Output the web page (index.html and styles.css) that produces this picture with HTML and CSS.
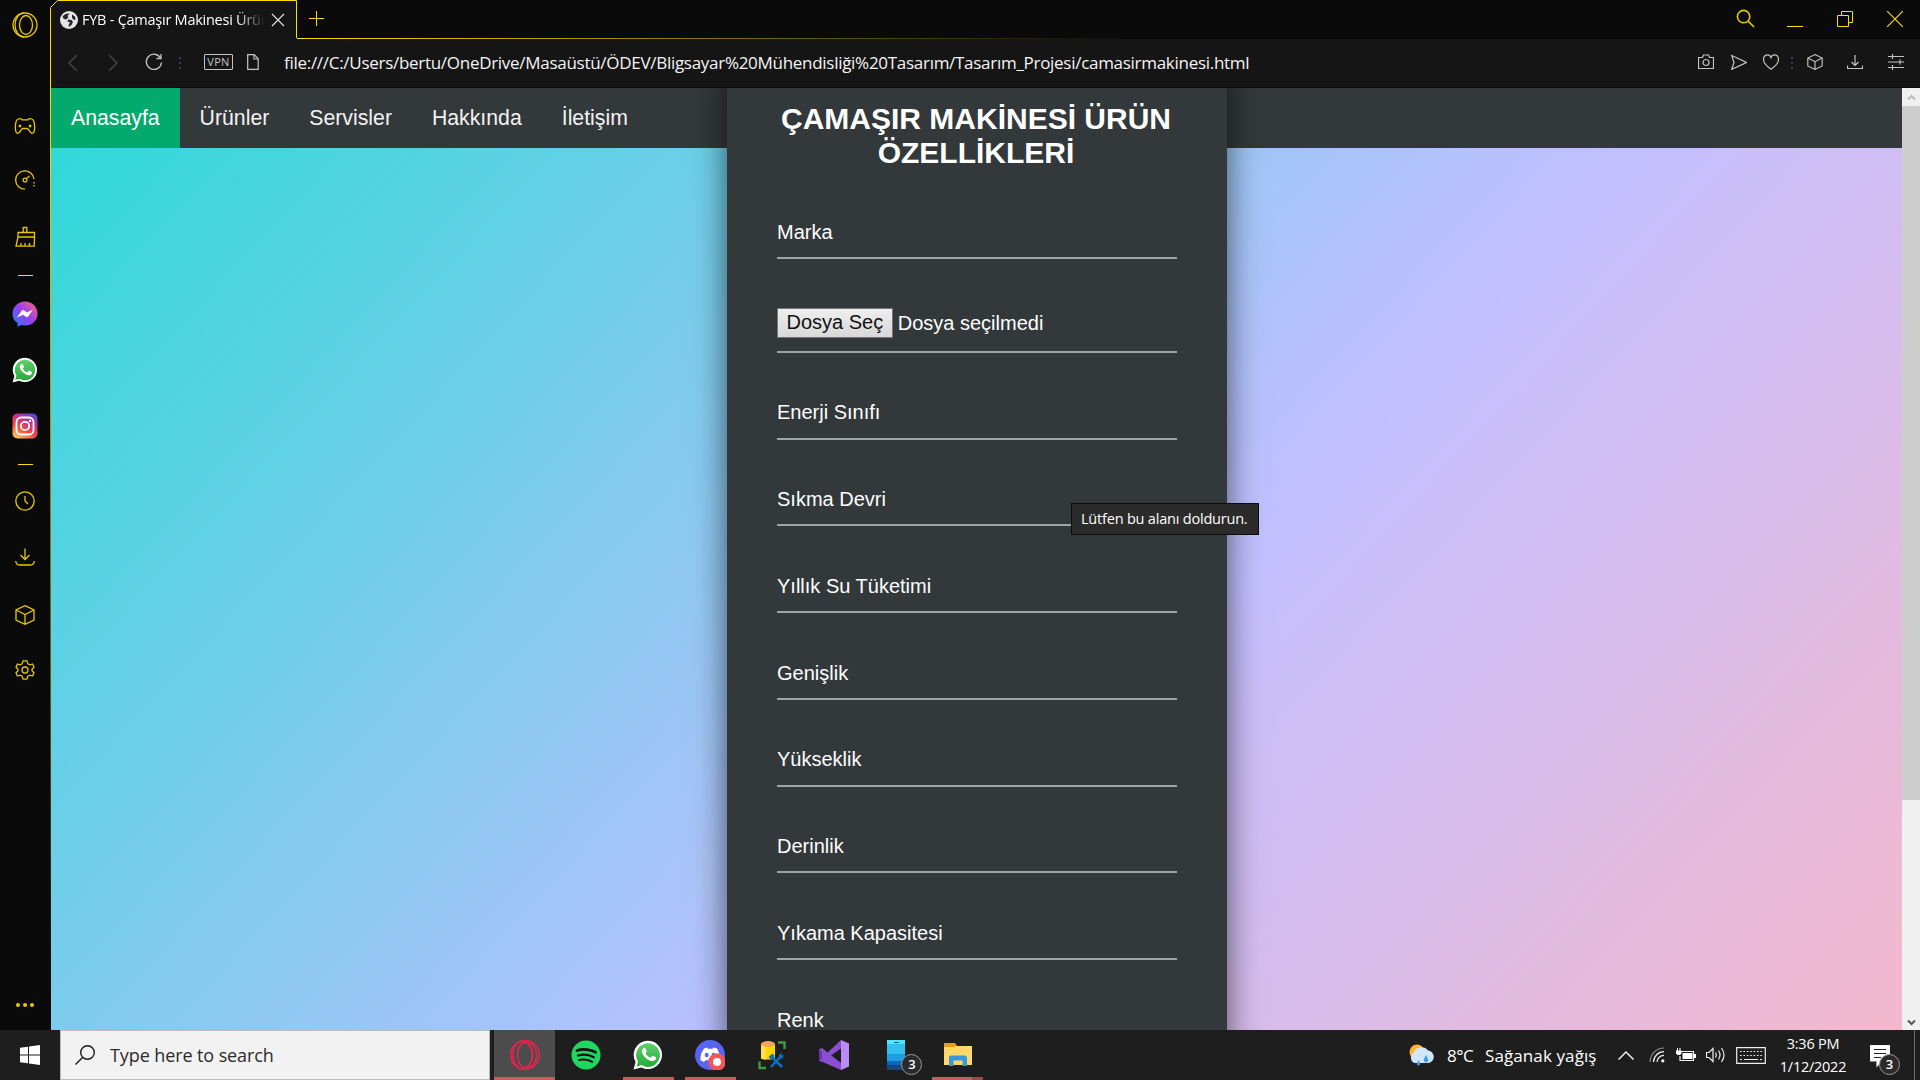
FILE: index.html
```html
<!DOCTYPE html>
<html lang="tr">
<head>
<meta charset="utf-8">
<title>FYB - Çamaşır Makinesi Ürün Özellikleri</title>
<link rel="stylesheet" href="styles.css">
</head>
<body>
<svg class="defs" aria-hidden="true">
  <defs>
    <linearGradient id="msg" x1="0" y1="1" x2="1" y2="0"><stop offset="0" stop-color="#1a86ff"/><stop offset=".5" stop-color="#9a3df0"/><stop offset="1" stop-color="#ff6a75"/></linearGradient>
    <linearGradient id="insta" x1=".2" y1="1" x2=".8" y2="0"><stop offset="0" stop-color="#fdc75c"/><stop offset=".35" stop-color="#f0503f"/><stop offset=".65" stop-color="#cb2f88"/><stop offset="1" stop-color="#5c49d0"/></linearGradient>
    <linearGradient id="waG" x1="0" y1="0" x2="0" y2="1"><stop offset="0" stop-color="#5fd06b"/><stop offset="1" stop-color="#28a93b"/></linearGradient>
    <linearGradient id="edgeX" gradientUnits="userSpaceOnUse" x1="297" y1="0" x2="1120" y2="0"><stop offset="0" stop-color="#ffdd00"/><stop offset="1" stop-color="#ffdd00" stop-opacity="0"/></linearGradient>
    <linearGradient id="edgeY" gradientUnits="userSpaceOnUse" x1="0" y1="100" x2="0" y2="1000"><stop offset="0" stop-color="#ffdd00"/><stop offset="1" stop-color="#ffdd00" stop-opacity="0"/></linearGradient>
    <symbol id="whatsapp" viewBox="0 0 30 30">
      <path d="M.5 29.5 2.6 22A14.2 14.2 0 1 1 8.2 27.4Z" fill="#fff"/>
      <path d="M3.6 26.4 5 21.5A11.9 11.9 0 1 1 8.6 25.1Z" fill="url(#waG)"/>
      <path d="M10.5 8.2c.6-.6 1.6-.6 2 .1l1.2 2.7c.2.6-.1 1-.9 2.1-.2.3-.1.6.1.9 1 1.600 2.400 2.800 4.200 3.500.4.200.7.100 1-.200l1-1.300c.3-.4.7-.4 1.100-.2l2.500 1.200c.5.300.6.500.5 1.100-.3 2-1.900 3.100-3.900 3-4.800-.5-10-5.200-10.400-9.800 0-1.300.7-2.300 1.600-3.100Z" fill="#fff"/>
    </symbol>
    <symbol id="cube" viewBox="0 0 20 20"><path d="M10 .7 19 5v10l-9 4.300L1 15V5ZM1 5l9 4.600L19 5M10 9.600v9.700"/></symbol>
  </defs>
</svg>

<div class="browser">
  <aside class="sidebar">
    <svg class="s-icon s-opera" viewBox="-15 -15 30 30"><circle r="12"/><ellipse rx="6.500" ry="9.500" cx="1"/><path d="M-1-12A9 12 0 0 0-1 12"/></svg>
    <svg class="s-icon s-gamepad" viewBox="-15 -15 30 30"><path d="M-3-6.200C-4-7.500-5.500-7.500-6.800-7-9-6-9.600-3-9.600 1-9.700 5-9 7.300-7 7.300-4.500 7.300-4.500 2.500-2 2.500h4C4.500 2.500 4.500 7.300 7 7.300 9 7.300 9.700 5 9.600 1 9.600-3 9-6 6.800-7 5.500-7.500 4-7.500 3-6.200Z"/><path class="dot" d="M-6.300-1.200h2.400v2.400h-2.400zM3.900-1.200h2.400v2.400H3.900z"/></svg>
    <svg class="s-icon s-gauge" viewBox="-15 -15 30 30"><path d="M0 9.200A9.200 9.200 0 1 1 9-1M1.200-1.200 4.500-4"/><circle r="1.900"/><path d="M9 2v6" stroke-dasharray="1.500 1.500"/></svg>
    <svg class="s-icon s-brush" viewBox="-15 -15 30 30"><path d="M-7-4.500H9.500V0H-7ZM-1.800-4.500v-5h3.600v5M-7 0-9 9.200H9.200L9.500 0M-4 9v-3M0 9v-3M4.500 9v-3"/></svg>
    <i class="s-line s-line-a"></i>
    <svg class="s-icon s-messenger fill" viewBox="-15 -15 30 30"><path d="M0-12.500C7-12.500 12.500-7.200 12.500-.3S7 11.500 0 11.500c-1.500 0-2.500-.2-3.800-.5L-7.500 12.700v-3.700C-11 6.700-12.500 3.500-12.500-.3-12.500-7.200-7-12.500 0-12.500Z" fill="url(#msg)"/><path d="M-8 3.500-3.400-3.200C-2.500-4.300-1.700-4.200-.8-3.600L1.900-1.600 8-4.600 3.400 2.200C2.500 3.400 1.700 3.400.8 2.700L-1.900.7Z" fill="#fff"/></svg>
    <svg class="s-icon s-wa fill" viewBox="-2.500 -2.500 35 35"><use href="#whatsapp" width="30" height="30"/></svg>
    <svg class="s-icon s-insta fill" viewBox="-15 -15 30 30"><rect x="-12.500" y="-12.500" width="25" height="25" rx="5" fill="url(#insta)"/><g fill="none" stroke="#fff" stroke-width="1.800"><rect x="-8.500" y="-8.500" width="17" height="17" rx="4.500"/><circle r="4.200"/></g><circle cx="5" cy="-5" r="1.200" fill="#fff"/></svg>
    <i class="s-line s-line-b"></i>
    <svg class="s-icon s-clock" viewBox="-15 -15 30 30"><circle r="9.200"/><path d="M0-5V0L3 3"/></svg>
    <svg class="s-icon s-down" viewBox="-15 -15 30 30"><path d="M0-8.500V2.500M-4.500-2 0 2.500 4.500-2M-9.300 4C-9 7-8 8-5.500 8h11C8 8 9 7 9.300 4"/></svg>
    <svg class="s-icon s-cube" viewBox="-5 -5 30 30"><use href="#cube" width="20" height="20"/></svg>
    <svg class="s-icon s-gear" viewBox="-15 -15 30 30"><circle r="3"/><path d="M-2-9.200H2L2.800-6.300 4.800-5.200 7.600-6 9-2.800 7-.8V.8L9 2.800 7.600 6 4.800 5.200 2.800 6.300 2 9.200H-2L-2.800 6.300-4.800 5.200-7.600 6-9 2.800-7 .8V-.8L-9-2.800-7.600-6-4.800-5.200-2.800-6.300Z" stroke-linejoin="round"/></svg>
    <svg class="s-icon s-dots" viewBox="-15 -15 30 30"><circle cx="-7" r="2"/><circle r="2"/><circle cx="7" r="2"/></svg>
  </aside>

  <div class="main">
    <header class="titlebar">
      <div class="tab">
        <svg class="globe" viewBox="0 0 18 18"><circle cx="9" cy="9" r="9" fill="#e4e6ea"/><path d="M2.500 6C3.500 3.500 6.500 2 9.500 2.500L7.500 5 8.500 6.500 6 8.500 4 8ZM8 8.500l3.500.5 1.500 2-1.500 3L9 16 8.500 14 10 11.500 7.500 10.500ZM12 3.500l3 2 .5 3-2 .5-1.500-2.500Z" fill="#25272b"/></svg>
        <span class="tab-title">FYB - Çamaşır Makinesi Ürün</span>
        <svg class="tab-close" viewBox="0 0 14 14"><path d="M1 1 13 13M13 1 1 13"/></svg>
      </div>
      <svg class="plus" viewBox="0 0 15 15"><path d="M7.500 0v15M0 7.500h15"/></svg>
      <div class="win">
        <svg viewBox="0 0 20 20" class="w-search"><circle cx="8" cy="8" r="6.500"/><path d="m13 13 6 6"/></svg>
        <svg viewBox="0 0 16 16" class="w-min"><path d="M0 15.500h16"/></svg>
        <svg viewBox="0 0 16 16" class="w-max"><path d="M.5 4.500h11v11H.5zM4.500 4V.5h11v11H12"/></svg>
        <svg viewBox="0 0 16 16" class="w-close"><path d="m0 0 16 16M16 0 0 16"/></svg>
      </div>
    </header>

    <div class="toolbar">
      <svg class="t-back dim" viewBox="0 0 10 16"><path d="M9 0 1 8l8 8"/></svg>
      <svg class="t-fwd dim" viewBox="0 0 10 16"><path d="m1 0 8 8-8 8"/></svg>
      <svg class="t-reload" viewBox="0 0 18 18"><path d="M15.500 5A7.600 7.600 0 1 0 16.500 9.500M11.500 5.500h4.500V1"/></svg>
      <i class="sep sep-a"></i>
      <span class="vpn">VPN</span>
      <svg class="t-page" viewBox="0 0 12 16"><path d="M.7.700h6.500l4 4v10.600H.7ZM7 .7V5h4.300"/></svg>
      <span class="url">file:///C:/Users/bertu/OneDrive/Masaüstü/ÖDEV/Bligsayar%20Mühendisliği%20Tasarım/Tasarım_Projesi/camasirmakinesi.html</span>
      <div class="tools">
        <svg viewBox="0 0 16 16" class="t-cam"><path d="M.5 3.500h4L5.500 1h5l1 2.500h4v11H.5Z"/><circle cx="8" cy="8.500" r="3"/></svg>
        <svg viewBox="0 0 16 16" class="t-send"><path d="M.7 1.500 15.500 8.500.7 15.300 3 8.500Z"/></svg>
        <svg viewBox="0 0 16 16" class="t-heart"><path d="M8 15.300C4 12.500.5 9.500.5 5.500.5 2.500 2.500.8 4.500.8 6.500.8 7.500 2 8 3.500 8.500 2 9.500.8 11.500.8s4 1.700 4 4.700c0 4-3.500 7-7.500 9.800Z"/></svg>
        <i class="sep sep-b"></i>
        <svg viewBox="0 0 20 20" class="t-cube"><use href="#cube"/></svg>
        <svg viewBox="0 0 16 16" class="t-dl"><path d="M8 1v10M4.500 8 8 11.500 11.500 8M.5 11.500v3h15v-3"/></svg>
        <svg viewBox="0 0 16 16" class="t-set"><path d="M0 2.500h16M0 8h16M0 13.500h16M4.500 0v5M12 5.500v5M4.500 11v5"/></svg>
      </div>
    </div>

    <div class="viewport">
      <div class="page">
        <nav class="topnav">
          <a class="active">Anasayfa</a><a>Ürünler</a><a>Servisler</a><a>Hakkında</a><a>İletişim</a>
        </nav>
        <form class="box">
          <h2>ÇAMAŞIR MAKİNESİ ÜRÜN ÖZELLİKLERİ</h2>
          <div class="field">Marka</div>
          <div class="field file"><span class="choose">Dosya Seç</span><span>Dosya seçilmedi</span></div>
          <div class="field">Enerji Sınıfı</div>
          <div class="field">Sıkma Devri</div>
          <div class="field">Yıllık Su Tüketimi</div>
          <div class="field">Genişlik</div>
          <div class="field">Yükseklik</div>
          <div class="field">Derinlik</div>
          <div class="field">Yıkama Kapasitesi</div>
          <div class="field">Renk</div>
        </form>
      </div>
      <div class="scrollbar">
        <svg class="sb-up" viewBox="0 0 18 18"><path d="M6 11.500 9.500 8l3.500 3.500"/></svg>
        <div class="thumb"></div>
        <svg class="sb-down" viewBox="0 0 18 18"><path d="m6 8.500 3.500 3.500L13 8.500"/></svg>
      </div>
    </div>
  </div>
</div>

<svg class="outline" viewBox="0 0 1920 1030"><path d="M50.500 100V7.500L57.500.5H296.500V38" stroke="#ffdd00"/><path d="M50 100h1v930h-1z" fill="url(#edgeY)" stroke="none"/><path d="M297 38h830v1H297z" fill="url(#edgeX)" stroke="none"/></svg>
<div class="tooltip">Lütfen bu alanı doldurun.</div>

<footer class="taskbar">
  <div class="start"><svg viewBox="0 0 20 20"><path d="M0 2.800 8 1.700V9.500H0ZM9 1.500 20 0V9.500H9ZM0 10.500H8v7.800L0 17.200ZM9 10.500H20V20L9 18.500Z" fill="#fff"/></svg></div>
  <div class="search"><svg viewBox="0 0 20 20"><circle cx="12.500" cy="7.500" r="6.800"/><path d="M7.500 12.500.5 19.500"/></svg><span>Type here to search</span></div>
  <div class="apps">
    <div class="app on current"><svg viewBox="-15 -15 30 30" fill="none" stroke="#fa1e4e" stroke-width="1.300"><circle r="14.300"/><ellipse rx="7.500" ry="12.500"/><path d="M-2-14.200A10 14 0 0 0-2 14.200M2-14.200A12 14.500 0 0 1 2 14.200M4-9.500A7 11 0 0 1 4 9.500"/></svg></div>
    <div class="app"><svg viewBox="-15 -15 30 30"><circle r="14.500" fill="#1ed760"/><g fill="none" stroke="#111" stroke-linecap="round"><path d="M-9-4.500C-3-6.500 5-5.500 9.500-2.800" stroke-width="2.800"/><path d="M-8 .5C-3-1 3.500-.2 7.800 2.200" stroke-width="2.300"/><path d="M-7 5C-2.500 4 2 4.500 6.200 6.800" stroke-width="1.900"/></g></svg></div>
    <div class="app on"><svg viewBox="0 0 30 30"><use href="#whatsapp"/></svg></div>
    <div class="app on"><svg viewBox="0 0 30 30"><circle cx="15" cy="15" r="15" fill="#5865f2"/><path d="M9 8.500 12 7.500 13 8.800h4.500L18.500 7.500l3.500 1C24 12 25.500 15.500 25 20L21.500 22 20 20.300H10.500L9 22 5.500 20.200C5 15.500 6.500 12 9 8.500Z" fill="#fff"/><ellipse cx="11.700" cy="15" rx="2" ry="2.200" fill="#5865f2"/><ellipse cx="18.700" cy="15" rx="2" ry="2.200" fill="#5865f2"/><circle cx="22" cy="22" r="8.800" fill="#f0575a"/><circle cx="22" cy="22" r="4" fill="#fff"/></svg></div>
    <div class="app"><svg viewBox="0 0 30 30"><path d="M4 4v14c0 2 14 2 14 0V4Z" fill="#ffd400"/><path d="M4 4v14c0 1 3 1.500 5 1.500V4Z" fill="#ffe04a"/><ellipse cx="11" cy="4" rx="7" ry="3" fill="#f2a65a"/><path d="M21 2.500h6.500V9M2.500 21.500v6.500H9" fill="none" stroke="#3f9a44" stroke-width="2.400"/><path d="m14 27 10-11M14 16l11 11" stroke="#0d6fc4" stroke-width="2.600"/><path d="m11.500 17 4-3.500 2 2.500-3.500 3.500ZM22 14.500l3-1.500-.5 2.500 2.500-.5-1.500 3.500h-3Z" fill="#0d6fc4"/></svg></div>
    <div class="app"><svg viewBox="0 0 30 30"><path d="M0 9.500 3 8 22 23v7L2.500 21.500 0 20ZM22 8.500 2.500 22 0 20.500 22 0Z" fill="#8a4fd0"/><path d="M0 9.500v11L3 19V11Z" fill="#6a35b0"/><path d="M22 0 30 3.500v23L22 30Z" fill="#b98cf5"/></svg></div>
    <div class="app phone"><svg viewBox="0 0 30 30"><path d="M6 0h18v7.500H6z" fill="#50e6ff"/><path d="M6 4h18v10H6z" fill="#32bfee"/><path d="M6 14h18v7H6z" fill="#1f9de2"/><path d="M6 21h18v4.500H6z" fill="#0a66bf"/><path d="M6 25.500h18V30H6z" fill="#17477c"/><path d="M13 2.500h5" stroke="#075a8c"/></svg><b class="count">3</b></div>
    <div class="app on multi"><svg viewBox="0 0 30 30"><path d="M1 3h11l2 3v5H1Z" fill="#e5a00d"/><path d="M1 7h10l2-1h16v19H1Z" fill="#ffd766"/><path d="M6 26V17.500Q6 15.500 8 15.500H22q2 0 2 2V26H19.500V20.500h-9V26Z" fill="#3a96dd"/></svg></div>
  </div>
  <div class="tray">
    <svg class="weather" viewBox="0 0 26 22"><circle cx="8" cy="8" r="7.500" fill="#ffb52e"/><path d="M6 19A5.500 5.500 0 0 1 4.500 9 8 7 0 0 1 19 6.500 6.300 6.300 0 0 1 19.500 19Z" fill="#cfe6fb"/><path d="m17 11 2 4a2.300 2.300 0 1 1-4 0ZM9.500 16l1.500 3a1.700 1.700 0 1 1-3 0Z" fill="#3f97ea"/></svg>
    <span class="temp">8°C</span><span class="cond">Sağanak yağış</span>
    <svg class="chev" viewBox="0 0 16 9"><path d="M.5 8.500 8 1l7.500 7.500"/></svg>
    <svg class="wifi" viewBox="0 0 16 16"><g stroke="#8d8d8d"><path d="M1 15A14 14 0 0 1 15 1"/></g><path d="M4.500 15A10.500 10.500 0 0 1 15 4.700M8 15A7 7 0 0 1 15 8.300"/><circle cx="13.800" cy="13.800" r="1.600" fill="#fff" stroke="none"/></svg>
    <svg class="bat" viewBox="0 0 20 14"><path d="M5 3.500h12.500v9H4V8"/><path d="M6.500 5h10v6h-10zM18 6h2v4h-2zM0 2.500h5.500v3l-1.500 1.500H1.500L0 5.500ZM1 0h1v3H1zM3.500 0h1v3h-1z" fill="#fff" stroke="none"/></svg>
    <svg class="spk" viewBox="0 0 20 18"><path d="M.5 6.500H3L7 2.500v13L3 11.500H.5ZM9.500 6.500Q11 9 9.500 11.500M12.500 4.500q3 4.500 0 9M15.500 2q5 7 0 14"/></svg>
    <svg class="kbd" viewBox="0 0 30 17"><path d="M.7.700h28.600v15.600H.7Z"/><path d="M4 4.500h22M4 8.500h22" stroke-dasharray="1.600 1.800"/><path d="M4 12.500h2M8 12.500h14M24 12.500h2"/></svg>
    <div class="clock"><span>3:36 PM</span><span>1/12/2022</span></div>
    <div class="notes"><svg viewBox="0 0 20 22"><path d="M0 0h20v16H12l-5 5V16H0Z" fill="#fff"/><path d="M4 4.500h12M4 8.500h12M4 12.500h7" stroke="#222"/></svg><b class="count">3</b></div>
  </div>
</footer>
</body>
</html>
```
FILE: styles.css
```css
* { box-sizing: border-box; }
body {
  margin: 0;
  width: 1920px;
  height: 1080px;
  overflow: hidden;
  position: relative;
  background: #0a0a0a;
  font-family: "Open Sans", "Noto Sans", sans-serif;
  color: #fff;
}
svg { display: block; flex: none; }
.defs { position: absolute; width: 0; height: 0; }

.browser { display: flex; height: 1030px; }

/* sidebar */
.sidebar {
  width: 51px;
  flex: none;
  display: flex;
  flex-direction: column;
  align-items: flex-start;
  padding: 10px 0 10px 10px;
  background: #0a0a0a;
}
.s-icon { width: 30px; height: 30px; fill: none; stroke: #e8c800; stroke-width: 1.3; }
.s-icon.fill { stroke: none; }
.s-icon .dot { fill: #e8c800; stroke: none; }
.s-line { width: 15px; height: 1px; background: #ffdd00; margin-left: 8px; }
.s-gamepad { margin-top: 71px; }
.s-gauge { margin-top: 24px; }
.s-brush { margin-top: 27px; }
.s-line-a { margin-top: 23px; }
.s-messenger { margin-top: 23px; }
.s-wa, .s-insta { margin-top: 26px; }
.s-line-b { margin-top: 23px; }
.s-clock { margin-top: 21px; }
.s-down { margin-top: 26px; }
.s-cube { margin-top: 28px; }
.s-gear { margin-top: 25px; }
.s-dots { margin-top: auto; }
.s-dots circle { fill: #e8c800; stroke: none; }

.main { flex: 1; min-width: 0; display: flex; flex-direction: column; }

/* title bar */
.titlebar { height: 39px; display: flex; align-items: flex-start; background: #0a0a0a; }
.tab { width: 246px; height: 39px; display: flex; align-items: center; background: #151515; padding-left: 9px; clip-path: polygon(7px 0, 100% 0, 100% 100%, 0 100%, 0 7px); }
.globe { width: 18px; height: 18px; }
.tab-title {
  width: 181px;
  margin-left: 4px;
  font-size: 14.5px;
  letter-spacing: -.25px;
  white-space: nowrap;
  overflow: hidden;
  -webkit-mask-image: linear-gradient(90deg, #000 155px, transparent 183px);
  mask-image: linear-gradient(90deg, #000 155px, transparent 183px);
}
.tab-close { width: 14px; height: 14px; margin-left: 8px; stroke: #ddd; stroke-width: 1.2; }
.plus { width: 15px; height: 15px; margin: 11px 0 0 12px; stroke: #ffdd00; }
.win { margin-left: auto; display: flex; padding: 9px 17px 0 0; fill: none; stroke: #ffdd00; stroke-width: 1.1; }
.w-search { width: 19px; height: 19px; stroke-width: 1.7; stroke: #e8c800; }
.w-min, .w-max, .w-close { width: 16px; height: 16px; margin-top: 2px; }
.w-min { margin-left: 32px; }
.w-max, .w-close { margin-left: 34px; }
.w-max { stroke-width: 1; }

/* toolbar */
.toolbar { height: 49px; display: flex; align-items: center; background: #151515; border-bottom: 1px solid #0d0d0d; padding-left: 17px; fill: none; stroke: #c4c4c4; stroke-width: 1.2; }
.dim { stroke: #4c4c4c; width: 10px; height: 16px; }
.t-fwd { margin-left: 30px; }
.t-reload { width: 18px; height: 18px; margin-left: 27px; margin-top: -2px; stroke-width: 1.3; }
.sep { width: 2px; height: 12px; flex: none; background: repeating-linear-gradient(#3c3a4e 0 2px, transparent 2px 5px); }
.sep-a { margin-left: 16px; }
.vpn { width: 29px; height: 16px; margin-left: 23px; margin-top: -2px; border: 1px solid #c4c4c4; border-radius: 1px; color: #c4c4c4; font-size: 11px; line-height: 14px; text-align: center; letter-spacing: .3px; }
.t-page { width: 12px; height: 16px; margin-left: 14px; margin-top: -2px; }
.url { margin-left: 25px; margin-top: -2px; font-size: 17px; letter-spacing: -.285px; white-space: nowrap; color: #f4f4f4; }
.tools { margin-left: auto; margin-top: -2px; display: flex; align-items: center; padding-right: 16px; }
.tools svg { width: 16px; height: 16px; }
.tools .t-send { margin-left: 17px; }
.tools .t-heart { margin-left: 16px; }
.sep-b { margin: 2px 0 0 12px; }
.tools .t-cube { margin-left: 14px; stroke-width: 1.4; }
.tools .t-dl { margin-left: 24px; }
.tools .t-set { margin-left: 25px; }

/* page */
.viewport { height: 942px; display: flex; font-family: "Liberation Sans", Arial, sans-serif; }
.page { flex: 1; position: relative; overflow: hidden; background: linear-gradient(133deg, #2bdad8 0%, #c4bfff 60.5%, #ffb6c1 109%); }
.topnav { height: 60px; display: flex; background: #33383b; }
.topnav a { padding: 0 20px; font-size: 21.25px; line-height: 60px; color: #f2f2f2; }
.topnav .active { background: #04aa6d; color: #fff; }
.box {
  position: absolute;
  left: 676px;
  top: -36px;
  width: 500px;
  height: 1100px;
  padding: 50px;
  background: #33383b;
  box-shadow: 0 19px 31px rgba(0, 0, 0, .6);
}
.box h2 { margin: 0 1px 0 -1px; font-size: 30px; line-height: 34px; text-align: center; }
.field { height: 38.25px; margin-bottom: 48.5px; border-bottom: 2px solid #a0a3a4; font-size: 20px; line-height: 23px; white-space: nowrap; }
.box h2 + .field { margin-top: 51px; }
.field.file { height: 45px; display: flex; align-items: flex-start; }
.choose { height: 30px; padding: 0 8.500px; margin-right: 5px; border: 1px solid #767676; background: linear-gradient(#eee, #d8d8d8); color: #111; line-height: 27px; }
.file span + span { line-height: 30px; }

.scrollbar { width: 18px; background: #f0f0f0; display: flex; flex-direction: column; fill: none; stroke-width: 2; }
.sb-up, .sb-down { width: 18px; height: 18px; }
.sb-up { stroke: #bbb; }
.sb-down { stroke: #555; margin-top: auto; }
.thumb { height: 694px; background: #cdcdcd; }

.outline { position: absolute; left: 0; top: 0; width: 1920px; height: 1030px; fill: none; pointer-events: none; }
.tooltip { position: absolute; left: 1071px; top: 503px; width: 188px; height: 32px; padding-left: 9px; background: #2b2b2b; border: 1px solid #0c0c0c; font-size: 14.5px; line-height: 29px; letter-spacing: -.2px; white-space: nowrap; }

/* taskbar */
.taskbar { height: 50px; display: flex; background: #1e1e1e; }
.start { width: 60px; display: flex; align-items: center; padding-left: 20px; }
.start svg { width: 20px; height: 20px; }
.search { width: 430px; display: flex; align-items: center; padding-left: 14px; background: #f2f2f2; border: 1px solid #bbb; color: #2b2b2b; }
.search svg { width: 20px; height: 20px; fill: none; stroke: #1c1c1c; stroke-width: 1.4; }
.search span { margin-left: 15px; font-size: 18px; letter-spacing: -.1px; }
.apps { display: flex; margin-left: 4px; }
.app { width: 61px; margin-right: .9px; position: relative; display: flex; align-items: center; justify-content: center; }
.app svg { width: 30px; height: 30px; }
.app.on { background: linear-gradient(#cb5a5c, #cb5a5c) center bottom / 51px 3px no-repeat; }
.app.current { background-color: #4c4c4c; background-size: 61px 3px; }
.app.multi { background-image: linear-gradient(90deg, #cb5a5c 40px, #9c4a4c 40px); }
.count { position: absolute; width: 21px; height: 21px; border: 1px solid #999; border-radius: 50%; background: #2b2b2b; font-size: 13px; line-height: 18px; font-weight: 600; text-align: center; }
.phone .count { left: 36px; top: 24px; }
.tray { margin-left: auto; display: flex; align-items: center; font-size: 17px; fill: none; stroke: #eee; stroke-width: 1.2; white-space: nowrap; padding-right: 5px; }
.tray span { stroke: none; }
.weather { width: 26px; height: 22px; stroke: none; }
.temp { width: 28px; margin-left: 12px; letter-spacing: -.5px; }
.cond { width: 114px; margin-left: 10px; letter-spacing: .1px; }
.chev { width: 16px; height: 9px; margin-left: 19px; stroke-width: 1.5; }
.wifi { width: 16px; height: 16px; margin-left: 15px; }
.bat { width: 20px; height: 14px; margin-left: 11px; }
.spk { width: 20px; height: 18px; margin-left: 10px; }
.kbd { width: 30px; height: 17px; margin-left: 10px; }
.clock { width: 70px; margin-left: 12px; display: flex; flex-direction: column; align-items: center; font-size: 14.5px; line-height: 23px; letter-spacing: -.25px; }
.notes { width: 45px; height: 50px; margin-left: 22px; padding-top: 15px; position: relative; border-right: 1px solid #6a6a6a; }
.notes svg { width: 20px; height: 22px; }
.notes .count { left: 9px; top: 24px; }
```
